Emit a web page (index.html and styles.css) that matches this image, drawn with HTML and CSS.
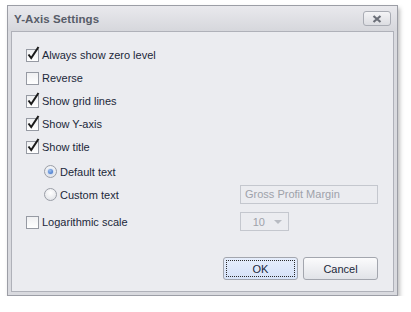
FILE: index.html
```html
<!DOCTYPE html>
<html lang="en">

<head>
    <meta charset="UTF-8">
    <title>Y-Axis Settings</title>
    <link rel="stylesheet" href="styles.css">
</head>

<body>

    <div class="window">
        <!-- Title bar -->
        <div class="title-bar">
            <span class="title">Y-Axis Settings</span>
            <button class="close-btn" aria-label="Close">
                <svg width="10" height="8" viewBox="0 0 10 8">
                    <path d="M1.5 1 L8.5 7 M8.5 1 L1.5 7" stroke="#6b6f78" stroke-width="2.2" fill="none" />
                </svg>
            </button>
        </div>

        <div class="panel">
            <div class="options">
                <label class="row">
                    <span class="check">
                        <svg class="tick" width="14" height="15" viewBox="0 0 14 15"><path d="M2.5 8.5 L5.2 12 L12.5 1" /></svg>
                    </span>
                    Always show zero level
                </label>
                <label class="row">
                    <span class="check"></span>
                    Reverse
                </label>
                <label class="row">
                    <span class="check">
                        <svg class="tick" width="14" height="15" viewBox="0 0 14 15"><path d="M2.5 8.5 L5.2 12 L12.5 1" /></svg>
                    </span>
                    Show grid lines
                </label>
                <label class="row">
                    <span class="check">
                        <svg class="tick" width="14" height="15" viewBox="0 0 14 15"><path d="M2.5 8.5 L5.2 12 L12.5 1" /></svg>
                    </span>
                    Show Y-axis
                </label>
                <label class="row">
                    <span class="check">
                        <svg class="tick" width="14" height="15" viewBox="0 0 14 15"><path d="M2.5 8.5 L5.2 12 L12.5 1" /></svg>
                    </span>
                    Show title
                </label>

                <!-- Title text choice -->
                <label class="row radio-row first-radio">
                    <span class="radio checked"></span>
                    Default text
                </label>
                <label class="row radio-row">
                    <span class="radio"></span>
                    Custom text
                </label>
                <div class="field">
                    <div class="text-box">Gross Profit Margin</div>
                </div>

                <label class="row log-row">
                    <span class="check"></span>
                    Logarithmic scale
                </label>
                <div class="field log-field">
                    <div class="spin-box">
                        <span class="spin-value">10</span>
                        <span class="spin-arrow"></span>
                    </div>
                </div>
            </div>

            <div class="buttons">
                <button class="btn btn-focused"><span>OK</span></button>
                <button class="btn">Cancel</button>
            </div>
        </div>
    </div>

</body>

</html>
```

FILE: styles.css
```css
body {
    margin: 0;
    padding: 0;
    background-color: white;
    font-family: "Liberation Sans", Arial, sans-serif;
    font-size: 11px;
    color: #1b283a;
}

.window {
    width: 389px;
    height: 289px;
    margin: 5px 0 0 7px;
    border: 1px solid #9c9ea6;
    background: #d9dadf;
    box-shadow: 2px 3px 4px rgba(0, 0, 0, 0.25);
    display: flex;
    flex-direction: column;
}

.title-bar {
    height: 25px;
    display: flex;
    align-items: center;
    justify-content: space-between;
    padding: 0 6px 0 6px;
    background: linear-gradient(#e9e9ed, #d6d7dc);
}

.title {
    font-weight: bold;
    font-size: 11.5px;
    color: #575c68;
    letter-spacing: 0.1px;
}

.close-btn {
    width: 28px;
    height: 15px;
    padding: 0;
    border: 1px solid #a9acb4;
    border-radius: 3px;
    background: linear-gradient(#f4f4f6, #dcdde2);
    display: flex;
    align-items: center;
    justify-content: center;
}

.panel {
    flex: 1;
    margin: 0 3px 3px 3px;
    border: 1px solid #afb1b9;
    background-color: #ebecf0;
    padding: 11px 15px 0 14px;
    display: flex;
    flex-direction: column;
}

.options {
    display: grid;
    grid-template-columns: 1fr 138px;
}

.row {
    grid-column: 1;
    height: 23px;
    display: flex;
    align-items: center;
    gap: 3px;
}

.radio-row {
    padding-left: 18px;
}

.first-radio {
    margin-top: 2px;
}

.log-row {
    margin-top: 4px;
}

.field {
    grid-column: 2;
    grid-row: 7;
    display: flex;
    align-items: center;
}

.log-field {
    grid-row: 8;
    margin-top: 4px;
}

/* Checkbox */
.check {
    position: relative;
    width: 11px;
    height: 11px;
    margin-top: 2px;
    border: 1px solid #969aa3;
    background: linear-gradient(#eff0f2, #ffffff);
}

.tick {
    position: absolute;
    left: -1px;
    top: -4px;
}

.tick path {
    fill: none;
    stroke: #1a1a1a;
    stroke-width: 2;
    stroke-linejoin: miter;
}

/* Radio button */
.radio {
    width: 11px;
    height: 11px;
    border-radius: 50%;
    border: 1px solid #9a9ea7;
    background: radial-gradient(circle at 50% 35%, #ffffff, #dcdee3);
    display: flex;
    align-items: center;
    justify-content: center;
}

.radio.checked::after {
    content: "";
    width: 5px;
    height: 5px;
    border-radius: 50%;
    background: radial-gradient(circle at 40% 35%, #9cc0f0, #2e63c0);
    box-shadow: 0 0 2px #6d9be0;
}

/* Disabled inputs */
.text-box {
    width: 132px;
    height: 17px;
    border: 1px solid #c4c7ce;
    padding-left: 4px;
    line-height: 17px;
    color: #9ea2aa;
}

.spin-box {
    width: 47px;
    height: 17px;
    border: 1px solid #c4c7ce;
    display: flex;
    align-items: center;
    justify-content: flex-end;
    color: #9ea2aa;
}

.spin-value {
    margin-right: 9px;
}

.spin-arrow {
    width: 0;
    height: 0;
    margin-right: 6px;
    border-left: 4px solid transparent;
    border-right: 4px solid transparent;
    border-top: 4px solid #b8bbc2;
}

/* Dialog buttons */
.buttons {
    margin-top: auto;
    margin-bottom: 11px;
    display: flex;
    justify-content: flex-end;
    gap: 5px;
}

.btn {
    width: 75px;
    height: 23px;
    padding: 0;
    border: 1px solid #a3a6ae;
    border-radius: 3px;
    background: linear-gradient(#fbfbfc, #e1e3e8);
    font-family: "Liberation Sans", Arial, sans-serif;
    font-size: 11px;
    color: #1b283a;
}

.btn-focused {
    padding: 2px;
    background: linear-gradient(#e6eefc, #d6e2f8);
}

.btn-focused span {
    display: flex;
    align-items: center;
    justify-content: center;
    height: 100%;
    border: 1px dotted #2a2a2a;
    box-sizing: border-box;
}
```
